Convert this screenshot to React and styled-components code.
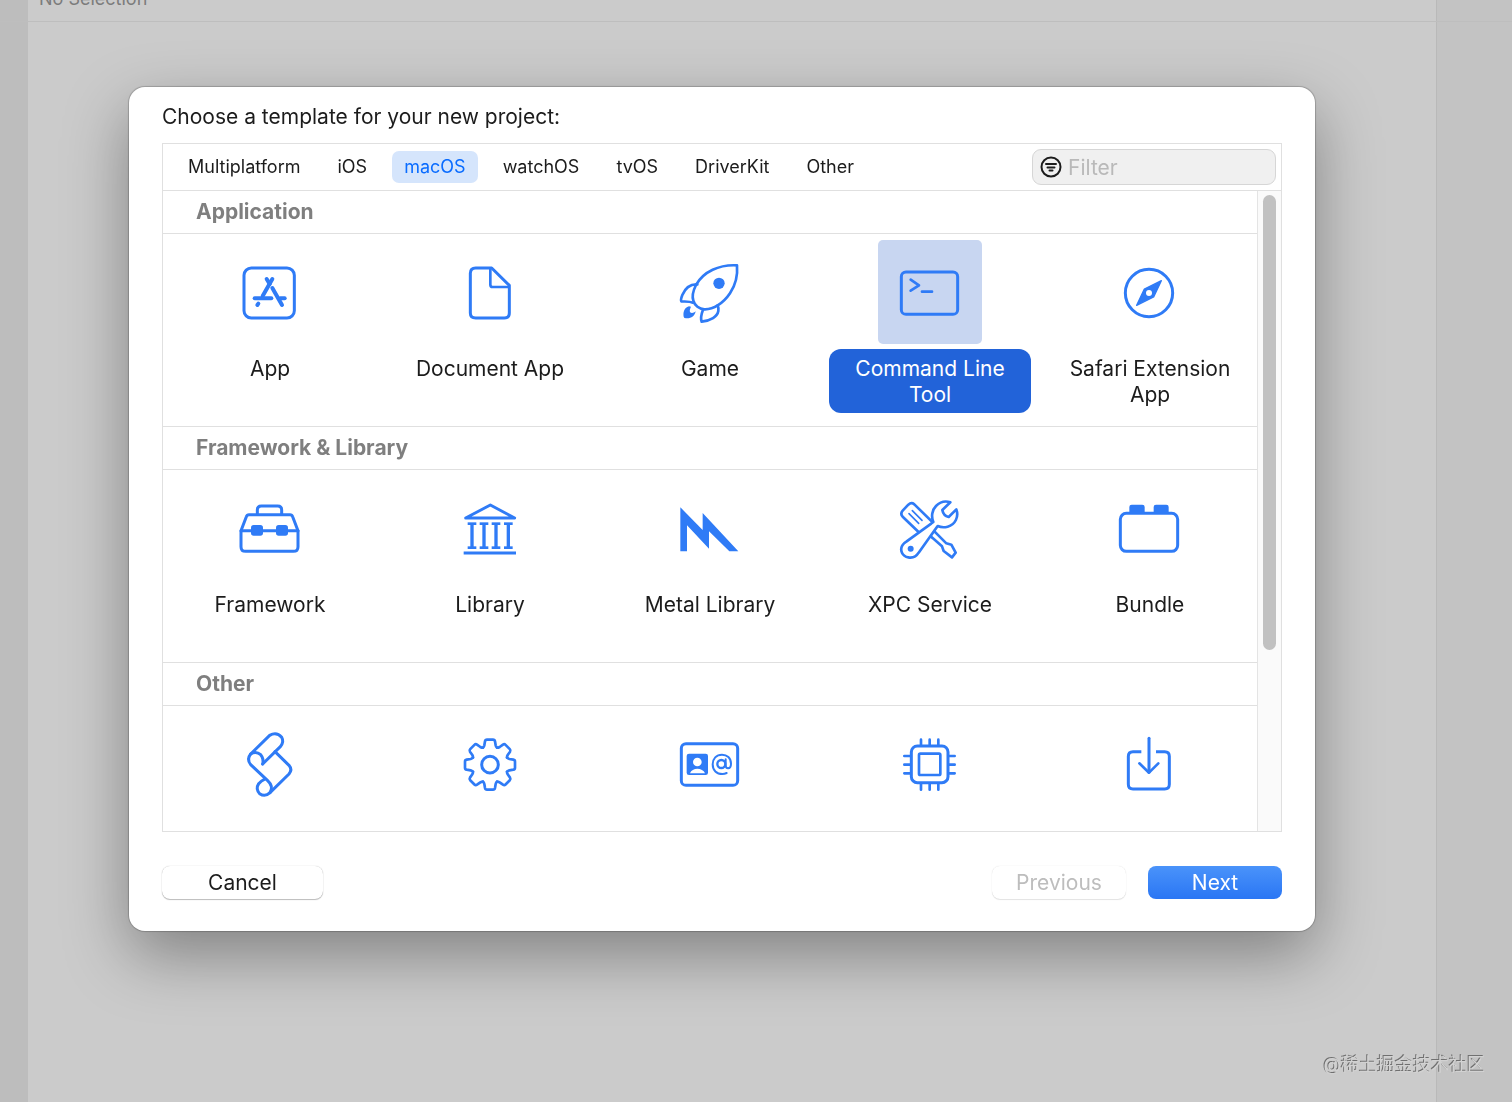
import { useState } from 'react'
import styled, { createGlobalStyle } from 'styled-components'

const platforms = ['Multiplatform', 'iOS', 'macOS', 'watchOS', 'tvOS', 'DriverKit', 'Other']

const toothAngles = [0, 45, 90, 135, 180, 225, 270, 315]

const AppIcon = () => (
  <TileIcon viewBox="-6 -30 312 312">
    <rect x="72" y="54" width="151" height="150" rx="22" />
    <g strokeWidth="12">
      <path d="M157 87 L128 138" />
      <path d="M140 87 L149 102" />
      <path d="M104 145 H154" />
      <path d="M181 145 H194" />
      <path d="M157 114 L186 165" />
      <path d="M115 161 L112 165" />
    </g>
  </TileIcon>
)

const DocumentIcon = () => (
  <TileIcon viewBox="654 -30 312 312">
    <path d="M815 54 H767 Q751 54 751 70 V189 Q751 204 767 204 H853 Q868 204 868 189 V106 Z" />
    <path d="M811 55 V104 Q811 111 818 111 H866" strokeWidth="8" />
  </TileIcon>
)

const RocketIcon = () => (
  <TileIcon viewBox="-6 15 312 312">
    <g strokeWidth="8">
      <path d="M231 91 C178 88 130 110 108 150 C98 170 97 188 100 197 C104 212 118 222 133 223 C160 224 190 205 210 175 C228 148 233 115 231 91 Z" />
      <path d="M112 148 C92 147 76 158 67 180 C63 190 62 196 64 199 C76 200 88 199 99 203" />
      <path d="M129 224 C123 240 122 252 125 260 C152 257 172 245 175 228 C176 222 175 216 173 211" />
    </g>
    <circle cx="177" cy="145" r="17" fill="currentColor" stroke="none" />
    <path
      d="M87 214 C71 219 69 234 71 245 Q72 250 78 250 C94 251 104 244 107 229 C101 235 93 236 90 231 C88 226 91 220 93 215 Z"
      fill="currentColor"
      stroke="none"
    />
  </TileIcon>
)

const TerminalIcon = () => (
  <TileIcon viewBox="654 15 312 312">
    <rect x="724" y="111" width="169" height="127" rx="14" />
    <path d="M752 134 L777 151 L752 167" strokeWidth="8" />
    <path d="M786 170 H816" strokeWidth="8" />
  </TileIcon>
)

const CompassIcon = () => (
  <TileIcon viewBox="144 -30 312 312">
    <circle cx="297" cy="129" r="71" />
    <path d="M334 92 L311 141 L260 166 L283 117 Z" fill="currentColor" strokeWidth="4" />
    <circle cx="297" cy="129" r="9" fill="#fff" stroke="none" />
  </TileIcon>
)

const ToolboxIcon = () => (
  <TileIcon viewBox="-6 -42 312 312">
    <path d="M112 73 V60 Q112 48 124 48 H173 Q185 48 185 60 V73" />
    <path d="M63 122 L79 80 Q81 74 87 74 H210 Q216 74 218 80 L234 122 V170 Q234 184 220 184 H77 Q63 184 63 170 Z" />
    <path d="M63 122 H234" />
    <rect x="93" y="105" width="36" height="32" rx="8" fill="currentColor" stroke="none" />
    <rect x="168" y="105" width="36" height="32" rx="8" fill="currentColor" stroke="none" />
  </TileIcon>
)

const ColumnsIcon = () => (
  <TileIcon viewBox="654 -42 312 312">
    <path d="M737 84 L811 45 L884 84 Z" />
    {[756, 792, 828, 865].map((x) => (
      <g key={x} strokeLinecap="butt">
        <path d={`M${x} 101 V173`} strokeWidth="10" />
        <path d={`M${x - 13} 101 H${x + 13}`} strokeWidth="8" />
        <path d={`M${x - 13} 173 H${x + 13}`} strokeWidth="8" />
      </g>
    ))}
    <path d="M731 189 H888" strokeLinecap="butt" />
  </TileIcon>
)

const MetalIcon = () => (
  <TileIcon viewBox="-6 -42 312 312">
    <path
      d="M61 52 L128 120 V69 L235 184 H208 L147 124 V176 L81 106 V184 H61 Z"
      fill="currentColor"
      stroke="none"
    />
  </TileIcon>
)

const ToolsIcon = () => (
  <TileIcon viewBox="654 -42 312 312">
    <g strokeWidth="8">
      <path d="M778 128 L728 80 Q720 71 728 62 L745 44 Q754 36 763 43 L818 97" />
      <path d="M747 71 L776 100" strokeWidth="5" />
      <path d="M757 62 L786 91" strokeWidth="5" />
      <path d="M811 138 L846 169 L851 183 L876 202 L887 188 L874 164 L859 160 L824 125" />
      <path
        d="M871 37 L847 60 Q850 77 866 81 L889 58 C897 80 886 104 863 110 C851 113 842 112 833 108 L776 188 C768 201 756 204 745 202 C726 199 719 180 727 166 C730 160 735 157 740 154 L820 96 C813 80 816 60 828 48 C840 36 857 32 871 37 Z"
        fill="#fff"
      />
    </g>
    <circle cx="752" cy="176" r="9" fill="currentColor" stroke="none" />
  </TileIcon>
)

const BrickIcon = () => (
  <TileIcon viewBox="-6 -42 312 312">
    <rect x="61" y="70" width="172" height="114" rx="18" />
    <path
      d="M88 70 V51 Q88 44 95 44 H127 Q134 44 134 51 V70 Z M161 70 V51 Q161 44 168 44 H199 Q206 44 206 51 V70 Z"
      fill="currentColor"
      stroke="none"
    />
  </TileIcon>
)

const ScriptIcon = () => (
  <TileIcon viewBox="-6 -24 312 312">
    <path d="M128 132 L181 80 Q193 66 185 52 Q170 34 149 46 L92 102 Q79 118 92 134 L143 182 Q162 200 150 218" />
    <path d="M92 102 Q108 92 122 104 Q132 116 128 132" />
    <path d="M165 95 L207 136 Q218 149 207 162 L150 218 Q135 232 119 221 Q106 207 116 191 Q124 182 133 178" />
  </TileIcon>
)

const GearIcon = () => (
  <TileIcon viewBox="654 -24 312 312">
    <g transform="translate(810 134)">
      {toothAngles.map((angle) => (
        <path
          key={angle}
          d="M-21 -51 Q-18 -54 -17 -58 L-15 -70 Q-14 -75 -9 -75 H9 Q14 -75 15 -70 L17 -58 Q18 -54 21 -51"
          strokeWidth="8"
          transform={`rotate(${angle})`}
        />
      ))}
      <circle r="25" />
    </g>
  </TileIcon>
)

const ContactIcon = () => (
  <TileIcon viewBox="-6 -24 312 312">
    <rect x="64" y="71" width="169" height="125" rx="14" />
    <rect x="80" y="101" width="64" height="64" rx="7" fill="currentColor" stroke="none" />
    <circle cx="112" cy="126" r="13" fill="#fff" stroke="none" />
    <path d="M90 160 C96 142 128 142 135 160 Z" fill="#fff" stroke="none" />
    <circle cx="184" cy="132" r="12" strokeWidth="7" />
    <path d="M197 118 V135 Q197 145 204 145 Q213 144 213 131 C213 114 201 104 186 104 C169 104 158 116 158 133 C158 151 170 162 187 162 Q194 162 200 159" strokeWidth="6" />
  </TileIcon>
)

const ChipIcon = () => (
  <TileIcon viewBox="654 -24 312 312">
    <rect x="754" y="78" width="110" height="110" rx="18" />
    <rect x="777" y="101" width="64" height="64" rx="4" strokeWidth="8" />
    <g strokeWidth="8">
      {[783, 809, 835].map((x) => (
        <path key={x} d={`M${x} 59 V74 M${x} 192 V209`} />
      ))}
      {[108, 134, 160].map((y) => (
        <path key={y} d={`M733 ${y} H750 M868 ${y} H884`} />
      ))}
    </g>
  </TileIcon>
)

const InstallIcon = () => (
  <TileIcon viewBox="-6 -24 312 312">
    <path d="M124 95 H99 Q85 95 85 109 V193 Q85 207 99 207 H194 Q208 207 208 193 V109 Q208 95 194 95 H168" strokeLinecap="butt" />
    <path d="M147 55 V157" />
    <path d="M118 130 L147 158 L175 130" strokeWidth="8" />
  </TileIcon>
)

const sections = [
  {
    title: 'Application',
    items: [
      { name: 'App', icon: AppIcon },
      { name: 'Document App', icon: DocumentIcon },
      { name: 'Game', icon: RocketIcon },
      { name: 'Command Line Tool', icon: TerminalIcon },
      { name: 'Safari Extension App', icon: CompassIcon },
    ],
  },
  {
    title: 'Framework & Library',
    items: [
      { name: 'Framework', icon: ToolboxIcon },
      { name: 'Library', icon: ColumnsIcon },
      { name: 'Metal Library', icon: MetalIcon },
      { name: 'XPC Service', icon: ToolsIcon },
      { name: 'Bundle', icon: BrickIcon },
    ],
  },
  {
    title: 'Other',
    iconsOnly: true,
    items: [
      { name: 'Script', icon: ScriptIcon },
      { name: 'Settings', icon: GearIcon },
      { name: 'Contacts', icon: ContactIcon },
      { name: 'Driver', icon: ChipIcon },
      { name: 'Installer', icon: InstallIcon },
    ],
  },
]

const TemplateSection = ({ section, selected, onSelect }) => (
  <section>
    <SectionTitle>{section.title}</SectionTitle>
    <TemplateGrid>
      {section.items.map(({ name, icon: Icon }) => (
        <Template
          key={name}
          type="button"
          aria-label={section.iconsOnly ? name : undefined}
          aria-pressed={selected === name}
          onClick={() => onSelect(name)}
        >
          <Tile $selected={selected === name}>
            <Icon />
          </Tile>
          {!section.iconsOnly && <TemplateName $selected={selected === name}>{name}</TemplateName>}
        </Template>
      ))}
    </TemplateGrid>
  </section>
)

const App = () => {
  const [platform, setPlatform] = useState('macOS')
  const [selected, setSelected] = useState('Command Line Tool')
  const [filter, setFilter] = useState('')
  const [scrolled, setScrolled] = useState(0)

  const handleScroll = (e) => {
    const { scrollTop, scrollHeight, clientHeight } = e.currentTarget
    setScrolled((scrollTop / scrollHeight) * clientHeight)
  }

  return (
    <>
      <GlobalStyle />
      <Workspace>
        <JumpBar>No Selection</JumpBar>
        <Columns>
          <Rail />
          <Editor />
          <Inspector />
        </Columns>
      </Workspace>
      <Overlay>
        <Sheet role="dialog" aria-labelledby="sheet-title">
          <SheetTitle id="sheet-title">Choose a template for your new project:</SheetTitle>
          <Chooser>
            <TabBar>
              <Tabs role="tablist">
                {platforms.map((name) => (
                  <Tab
                    key={name}
                    type="button"
                    role="tab"
                    aria-selected={platform === name}
                    $active={platform === name}
                    onClick={() => setPlatform(name)}
                  >
                    {name}
                  </Tab>
                ))}
              </Tabs>
              <FilterField>
                <svg width="22" height="22" viewBox="0 0 44 44" fill="none" stroke="#1c1c1c" strokeWidth="4" strokeLinecap="round" aria-hidden="true">
                  <circle cx="22" cy="22" r="19" />
                  <path d="M12 16 H32 M15 23 H29 M19 29 H25" />
                </svg>
                <FilterInput
                  type="text"
                  aria-label="Filter"
                  placeholder="Filter"
                  value={filter}
                  onChange={(e) => setFilter(e.target.value)}
                />
              </FilterField>
            </TabBar>
            <ListArea>
              <List onScroll={handleScroll}>
                {sections.map((section) => (
                  <TemplateSection
                    key={section.title}
                    section={section}
                    selected={selected}
                    onSelect={setSelected}
                  />
                ))}
              </List>
              <Track>
                <Thumb style={{ marginTop: scrolled }} />
              </Track>
            </ListArea>
          </Chooser>
          <Footer>
            <PushButton type="button" $wide>Cancel</PushButton>
            <ButtonGroup>
              <PushButton type="button" disabled>Previous</PushButton>
              <PushButton type="button" $primary>Next</PushButton>
            </ButtonGroup>
          </Footer>
        </Sheet>
      </Overlay>
      <Watermark>@稀土掘金技术社区</Watermark>
    </>
  )
}

export default App

const GlobalStyle = createGlobalStyle`
  * {
    box-sizing: border-box;
  }
  body {
    margin: 0;
    overflow: hidden;
    color: #1c1c1c;
    font-family: Inter, 'Noto Sans CJK SC', sans-serif;
  }
  button,
  input {
    font-family: inherit;
  }
`

const Workspace = styled.main`
  display: flex;
  flex-direction: column;
  height: 100vh;
  background: #cbcbcb;
`

const Columns = styled.div`
  display: flex;
  flex: 1;
`

const Rail = styled.div`
  width: 28px;
  background: #bdbdbd;
`

const Editor = styled.div`
  flex: 1;
`

const Inspector = styled.div`
  width: 76px;
  border-left: 1px solid #b9b9b9;
  background: #c3c3c3;
`

/* scrolled half way out of the window, side columns show through */
const JumpBar = styled.div`
  display: flex;
  align-items: center;
  height: 44px;
  margin-top: -22px;
  padding: 0 0 2px 39px;
  border-bottom: 1px solid #bebebe;
  background: linear-gradient(
    to right,
    #bdbdbd 28px,
    #cbcbcb 28px,
    #cbcbcb calc(100% - 76px),
    #b9b9b9 calc(100% - 76px),
    #b9b9b9 calc(100% - 75px),
    #c3c3c3 calc(100% - 75px)
  );
  color: #7c7c7c;
  font-size: 18px;
`

const Overlay = styled.div`
  position: fixed;
  inset: 0;
  display: flex;
  padding: 87px 197px 171px 129px;
`

const Sheet = styled.div`
  display: flex;
  flex: 1;
  flex-direction: column;
  min-width: 0;
  padding: 17px 33px 32px;
  border-radius: 16px;
  background: #fff;
  box-shadow: 0 0 1px 1px rgba(0, 0, 0, 0.2), 0 24px 64px rgba(0, 0, 0, 0.36);
`

const SheetTitle = styled.h1`
  margin: 0 0 13px;
  font-size: 21px;
  font-weight: 400;
  line-height: 26px;
`

const Chooser = styled.div`
  display: flex;
  flex: 1;
  flex-direction: column;
  min-height: 0;
  border: 1px solid #e0e0e0;
`

const TabBar = styled.div`
  display: flex;
  align-items: center;
  justify-content: space-between;
  height: 47px;
  padding: 0 5px 0 13px;
  border-bottom: 1px solid #e0e0e0;
`

const Tabs = styled.div`
  display: flex;
  gap: 13px;
`

const Tab = styled.button`
  height: 32px;
  padding: 0 12px 1px;
  border: 0;
  border-radius: 7px;
  background: ${({ $active }) => ($active ? '#d5e5fc' : 'transparent')};
  color: ${({ $active }) => ($active ? '#0a6cff' : 'inherit')};
  font-size: 18px;
`

const FilterField = styled.label`
  display: flex;
  align-items: center;
  gap: 6px;
  width: 244px;
  height: 36px;
  padding: 0 7px;
  border: 1px solid #d6d6d6;
  border-radius: 9px;
  background: #f0f0f0;
`

const FilterInput = styled.input`
  flex: 1;
  min-width: 0;
  padding: 0;
  border: 0;
  outline: 0;
  background: transparent;
  font-size: 21px;
  &::placeholder {
    color: #b9b9b9;
  }
`

const ListArea = styled.div`
  display: flex;
  flex: 1;
  min-height: 0;
`

const List = styled.div`
  flex: 1;
  min-width: 0;
  overflow-y: auto;
  scrollbar-width: none;
`

const Track = styled.div`
  width: 24px;
  padding: 4px 5px;
  border-left: 1px solid #e4e4e4;
  background: #fafafa;
`

const Thumb = styled.div`
  height: 72%;
  width: 13px;
  border-radius: 7px;
  background: #c1c1c1;
`

const SectionTitle = styled.h2`
  height: 43px;
  margin: 0;
  padding-left: 33px;
  border-bottom: 1px solid #e0e0e0;
  color: #7f7f7f;
  font-size: 21px;
  font-weight: 700;
  line-height: 42px;
`

const TemplateGrid = styled.div`
  display: grid;
  grid-template-columns: repeat(5, 1fr);
  gap: 18px;
  height: 193px;
  padding: 6px 6px 0;
  border-bottom: 1px solid #e0e0e0;
`

const Template = styled.button`
  display: flex;
  flex-direction: column;
  align-items: center;
  gap: 5px;
  padding: 0;
  border: 0;
  background: none;
  color: inherit;
`

const Tile = styled.span`
  width: 104px;
  height: 104px;
  border-radius: 5px;
  background: ${({ $selected }) => ($selected ? '#c8d6f1' : 'transparent')};
  color: #2f7bf6;
`

const TileIcon = styled.svg.attrs({ 'aria-hidden': true })`
  display: block;
  width: 104px;
  height: 104px;
  fill: none;
  stroke: currentColor;
  stroke-width: 9px;
  stroke-linecap: round;
  stroke-linejoin: round;
`

const TemplateName = styled.span`
  width: 100%;
  padding: 7px 18px 5px;
  border-radius: 12px;
  background: ${({ $selected }) => ($selected ? '#2263d9' : 'transparent')};
  color: ${({ $selected }) => ($selected ? '#fff' : 'inherit')};
  font-size: 21px;
  line-height: 26px;
`

const Footer = styled.div`
  display: flex;
  justify-content: space-between;
  padding-top: 34px;
`

const ButtonGroup = styled.div`
  display: flex;
  gap: 22px;
`

const PushButton = styled.button`
  width: ${({ $wide }) => ($wide ? '161px' : '134px')};
  height: 33px;
  padding: 0 0 1px;
  border: 0;
  border-radius: 8px;
  background: ${({ $primary }) => ($primary ? 'linear-gradient(#4a93fa, #2a76f4)' : '#fff')};
  box-shadow: ${({ $primary }) =>
    $primary ? 'none' : '0 0 1px rgba(0, 0, 0, 0.3), 0 1px 1px rgba(0, 0, 0, 0.25)'};
  color: ${({ $primary }) => ($primary ? '#fff' : '#1c1c1c')};
  font-size: 21px;
  &:disabled {
    box-shadow: 0 0 1px rgba(0, 0, 0, 0.16), 0 1px 1px rgba(0, 0, 0, 0.1);
    color: #bdbdbd;
  }
`

const Watermark = styled.div`
  position: fixed;
  right: 27px;
  bottom: 24px;
  color: #d2d2d2;
  font-size: 18px;
  line-height: 26px;
  text-shadow: -1px -1px 0 #707070;
`
